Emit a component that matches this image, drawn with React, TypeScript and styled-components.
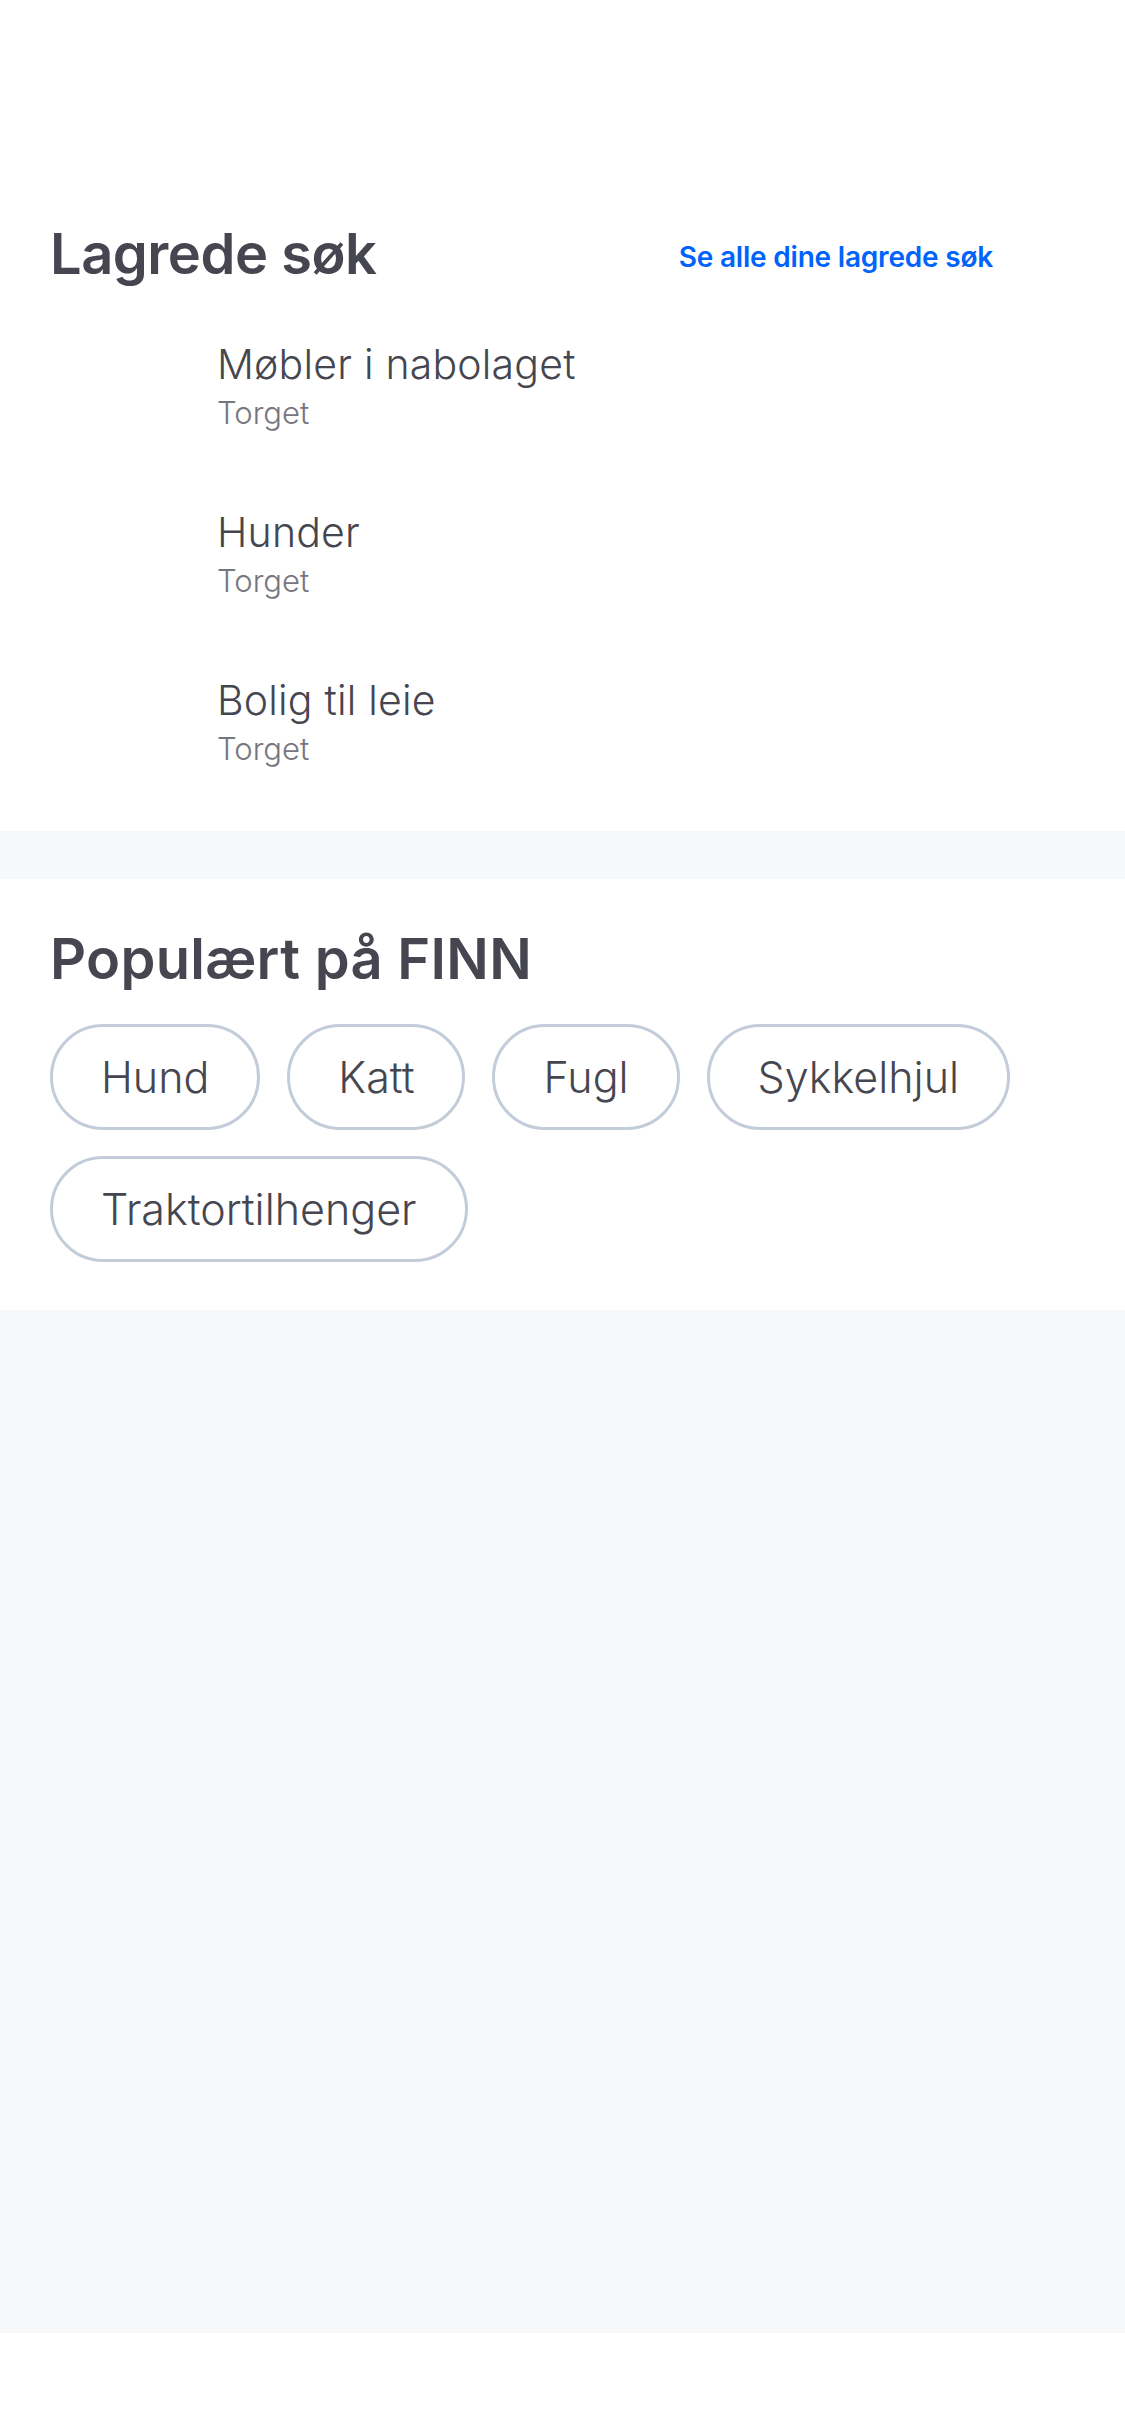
import React from "react";
import styled, { createGlobalStyle } from "styled-components";

const GlobalStyle = createGlobalStyle`
  html, body {
    margin: 0;
    padding: 0;
    background: #ffffff;
  }
  body {
    font-family: Inter, Lato, "Noto Sans", "Liberation Sans", sans-serif;
    color: #464650;
    -webkit-font-smoothing: antialiased;
  }
  * { box-sizing: border-box; }
`;

const Page = styled.div`
  width: 1125px;
  min-height: 2436px;
  display: flex;
  flex-direction: column;
  background: #ffffff;
`;

const Section = styled.section<{ $top: number; $bottom: number }>`
  background: #ffffff;
  padding: ${(p) => p.$top}px 50px ${(p) => p.$bottom}px 50px;
  display: flex;
  flex-direction: column;
`;

const Divider = styled.div<{ $height: number }>`
  height: ${(p) => p.$height}px;
  background: #f7f8fa;
  flex-shrink: 0;
`;

const HeaderRow = styled.div`
  display: flex;
  align-items: center;
  justify-content: space-between;
  padding-right: 82px;
`;

const Heading = styled.h2<{ $spacing?: number }>`
  margin: 0;
  font-size: 56px;
  line-height: 68px;
  font-weight: 600;
  color: #464650;
  letter-spacing: ${(p) => (p.$spacing ?? -0.5)}px;
`;

const SeeAllLink = styled.a`
  margin-top: 6px;
  font-size: 28px;
  line-height: 36px;
  font-weight: 600;
  color: #0063fb;
  text-decoration: none;
  letter-spacing: -0.2px;
`;

const SearchList = styled.ul`
  list-style: none;
  margin: 14px 0 0 0;
  padding: 0;
  display: flex;
  flex-direction: column;
`;

const SearchRow = styled.li`
  display: flex;
  align-items: flex-start;
  padding: 38px 0 39px 0;
`;

const IconSlot = styled.div`
  width: 167px;
  flex-shrink: 0;
`;

const SearchText = styled.div`
  display: flex;
  flex-direction: column;
  gap: 7px;
`;

const SearchTitle = styled.span`
  font-size: 41px;
  line-height: 48px;
  font-weight: 300;
  color: #464650;
  letter-spacing: 0.2px;
`;

const SearchSub = styled.span`
  font-size: 31px;
  line-height: 36px;
  font-weight: 300;
  color: #76767e;
`;

const PillWrap = styled.div`
  display: flex;
  flex-wrap: wrap;
  column-gap: 27px;
  row-gap: 26px;
  margin-top: 31px;
`;

const Pill = styled.button`
  height: 106px;
  padding: 0 48px;
  border: 3px solid #c3ccd9;
  border-radius: 53px;
  background: #ffffff;
  font-family: inherit;
  font-size: 43px;
  font-weight: 300;
  color: #464650;
  display: inline-flex;
  align-items: center;
  cursor: pointer;
`;

const Filler = styled.div`
  flex: 1;
  background: #f7f8fa;
  min-height: 1023px;
`;

const BottomBar = styled.div`
  height: 103px;
  background: #ffffff;
  flex-shrink: 0;
`;

const searches = [
  { title: "Møbler i nabolaget", market: "Torget" },
  { title: "Hunder", market: "Torget" },
  { title: "Bolig til leie", market: "Torget" },
];

const popular = ["Hund", "Katt", "Fugl", "Sykkelhjul", "Traktortilhenger"];

export default function App() {
  return (
    <>
      <GlobalStyle />
      <Page>
        <Section $top={220} $bottom={25}>
          <HeaderRow>
            <Heading>Lagrede søk</Heading>
            <SeeAllLink href="#">Se alle dine lagrede søk</SeeAllLink>
          </HeaderRow>
          <SearchList>
            {searches.map((s) => (
              <SearchRow key={s.title}>
                <IconSlot />
                <SearchText>
                  <SearchTitle>{s.title}</SearchTitle>
                  <SearchSub>{s.market}</SearchSub>
                </SearchText>
              </SearchRow>
            ))}
          </SearchList>
        </Section>
        <Divider $height={48} />
        <Section $top={46} $bottom={48}>
          <Heading $spacing={0.3}>Populært på FINN</Heading>
          <PillWrap>
            {popular.map((p) => (
              <Pill key={p}>{p}</Pill>
            ))}
          </PillWrap>
        </Section>
        <Filler />
        <BottomBar />
      </Page>
    </>
  );
}
